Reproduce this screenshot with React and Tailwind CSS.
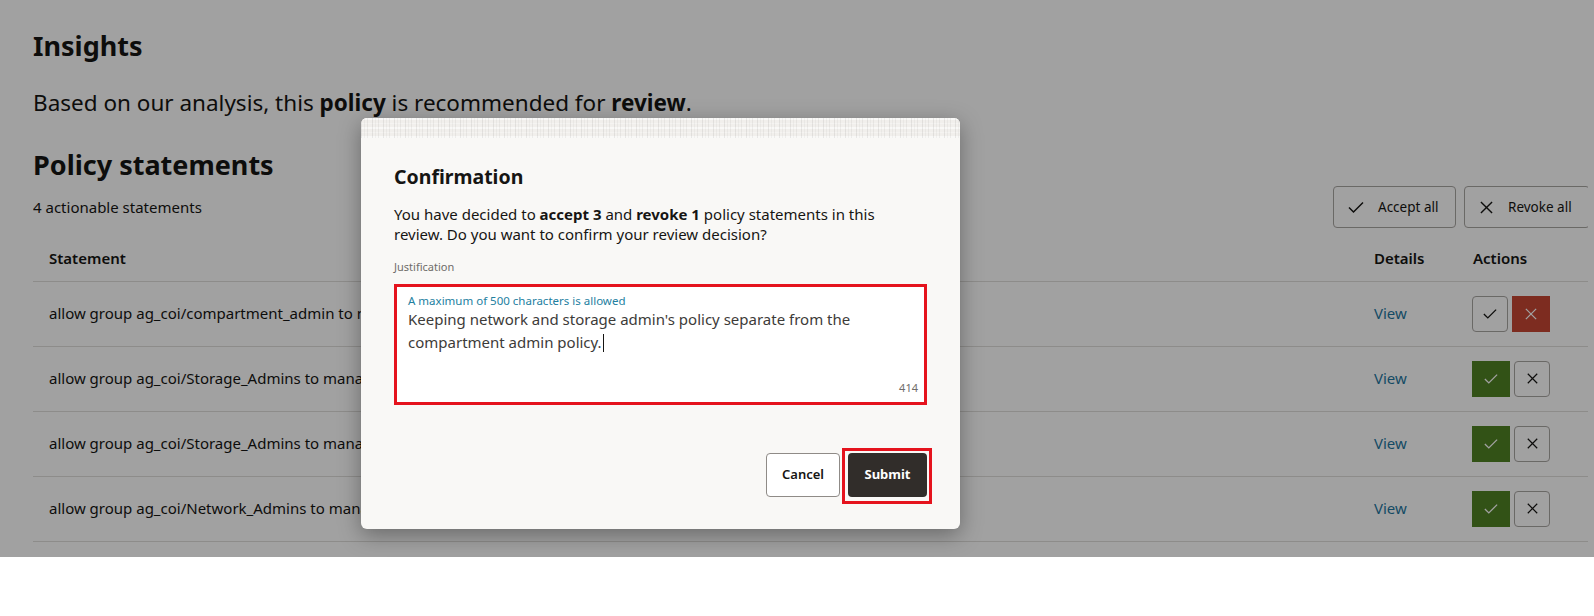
import React from 'react';

const statements = [
  { id: 1, text: 'allow group ag_coi/compartment_admin to manage all-resources in compartment ag_coi', decision: 'revoke' },
  { id: 2, text: 'allow group ag_coi/Storage_Admins to manage volume-family in compartment ag_coi', decision: 'accept' },
  { id: 3, text: 'allow group ag_coi/Storage_Admins to manage object-family in compartment ag_coi', decision: 'accept' },
  { id: 4, text: 'allow group ag_coi/Network_Admins to manage virtual-network-family in compartment ag_coi', decision: 'accept' },
];

const CheckIcon = ({ className }) => (
  <svg viewBox="0 0 16 13" fill="none" stroke="currentColor" strokeWidth="1.5" className={className}>
    <path d="M1 6.5 5.5 11 15 1.5" />
  </svg>
);

const CrossIcon = ({ className }) => (
  <svg viewBox="0 0 14 14" fill="none" stroke="currentColor" strokeWidth="1.5" className={className}>
    <path d="M1 1 13 13M13 1 1 13" />
  </svg>
);

const DecisionButtons = ({ decision }) => {
  const accepted = decision === 'accept';
  return (
    <div className="flex items-center gap-[4px]">
      {accepted ? (
        <button type="button" className="flex h-[36px] w-[38px] items-center justify-center bg-[#508223] text-white">
          <CheckIcon className="w-[14px] h-[12px]" />
        </button>
      ) : (
        <button type="button" className="flex h-[36px] w-[36px] items-center justify-center rounded-[4px] border border-[#a9a6a2] bg-white text-[#161513]">
          <CheckIcon className="w-[14px] h-[12px]" />
        </button>
      )}
      {accepted ? (
        <button type="button" className="flex h-[36px] w-[36px] items-center justify-center rounded-[4px] border border-[#a9a6a2] bg-white text-[#161513]">
          <CrossIcon className="w-[11px] h-[11px]" />
        </button>
      ) : (
        <button type="button" className="flex h-[36px] w-[38px] items-center justify-center bg-[#c74634] text-white">
          <CrossIcon className="w-[12px] h-[12px]" />
        </button>
      )}
    </div>
  );
};

const ConfirmDialog = () => (
  <div className="absolute left-[361px] top-[118px] w-[599px] overflow-hidden rounded-[6px] bg-[#f9f8f6] shadow-[0_6px_22px_rgba(0,0,0,0.35)]">
    {/* decorative textured band on top of the panel */}
    <div className="h-[20px] bg-[#f1efec] bg-[image:repeating-linear-gradient(90deg,rgba(0,0,0,0.07)_0px,rgba(0,0,0,0.07)_1px,transparent_1px,transparent_3px,rgba(0,0,0,0.035)_3px,rgba(0,0,0,0.035)_4px,transparent_4px,transparent_6px,rgba(0,0,0,0.05)_6px,rgba(0,0,0,0.05)_7px,transparent_7px,transparent_11px),repeating-linear-gradient(0deg,rgba(255,255,255,0.6)_0px,rgba(255,255,255,0.6)_2px,transparent_2px,transparent_5px,rgba(255,255,255,0.3)_5px,rgba(255,255,255,0.3)_6px,transparent_6px,transparent_9px)]" />
    <div className="px-[33px] pb-[32px]">
      <h2 className="mt-[25px] text-[19.5px] font-bold leading-[28px] text-[#161513]">Confirmation</h2>
      <p className="mt-[13px] text-[15px] leading-[20px] text-[#161513]">
        You have decided to <span className="font-bold">accept 3</span> and <span className="font-bold">revoke 1</span> policy statements in this
        <br />
        review. Do you want to confirm your review decision?
      </p>
      <div className="mt-[15px] text-[11px] leading-[16px] text-[#6f6c69]">Justification</div>
      <div className="mt-[9px] flex h-[121px] flex-col border-[3px] border-[#e5131d] bg-white px-[11px] pt-[6px] pb-[6px]">
        <div className="text-[11.5px] leading-[16px] text-[#23809f]">A maximum of 500 characters is allowed</div>
        <div className="text-[15px] leading-[21px] text-[#3d3b39]">
          Keeping network and storage admin's policy separate from the
          <br />
          compartment admin policy.<span className="ml-[1px] inline-block h-[18px] w-px translate-y-[4px] bg-[#161513] align-baseline" />
        </div>
        <div className="flex-1" />
        <div className="-mr-[5px] self-end text-[11px] leading-[16px] text-[#6f6c69]">414</div>
      </div>
      <div className="mt-[48px] flex justify-end gap-[8px]">
        <button type="button" className="h-[44px] w-[74px] rounded-[4px] border border-[#8f8b87] bg-white text-[13px] font-semibold text-[#161513]">
          Cancel
        </button>
        <div className="relative">
          <button type="button" className="h-[44px] w-[79px] rounded-[4px] bg-[#312d2a] text-[13px] font-bold text-white">
            Submit
          </button>
          <span className="pointer-events-none absolute -left-[6px] -right-[5px] -top-[5px] -bottom-[7px] border-[3px] border-[#e5131d]" />
        </div>
      </div>
    </div>
  </div>
);

export default function App() {
  return (
    <div className="min-h-[616px] bg-white font-['Noto_Sans',sans-serif]">
      <div className="relative h-[557px] overflow-hidden bg-white">
        <main className="pl-[33px] pr-[6px] pt-[28px] text-[#161513]">
          <div className="overflow-hidden">
            <h1 className="text-[27px] font-bold leading-[36px]">Insights</h1>
            <p className="mt-[24px] text-[22.5px] leading-[30px]">
              Based on our analysis, this <span className="font-bold">policy</span> is recommended for <span className="font-bold">review</span>.
            </p>
            <h2 className="mt-[29px] text-[27px] font-bold leading-[36px]">Policy statements</h2>

            <div className="mt-[3px] flex items-center justify-between">
              <span className="text-[15px]">4 actionable statements</span>
              <div className="-mr-[2px] flex gap-[8px]">
                <button type="button" className="flex h-[42px] w-[123px] items-center gap-[14px] rounded-[4px] border border-[#a9a6a2] bg-white px-[14px] text-[13.5px]">
                  <CheckIcon className="w-[16px] h-[13px]" />
                  Accept all
                </button>
                <button type="button" className="flex h-[42px] w-[126px] items-center gap-[15px] rounded-[4px] border border-[#a9a6a2] bg-white px-[15px] text-[13.5px]">
                  <CrossIcon className="w-[13px] h-[13px]" />
                  Revoke all
                </button>
              </div>
            </div>

            <table className="mt-[7px] w-full border-collapse text-left text-[15px]">
              <thead>
                <tr className="h-[46px] border-b border-[#e0dedb]">
                  <th className="pl-[16px] font-semibold">Statement</th>
                  <th className="w-[99px] pl-[16px] font-semibold">Details</th>
                  <th className="w-[131px] pl-[16px] font-semibold">Actions</th>
                </tr>
              </thead>
              <tbody>
                {statements.map((s) => (
                  <tr key={s.id} className="h-[65px] border-b border-[#e0dedb]">
                    <td className="pl-[16px]">{s.text}</td>
                    <td className="pl-[16px]">
                      <a href="#" className="text-[#1f77a0]">View</a>
                    </td>
                    <td className="pl-[15px]">
                      <DecisionButtons decision={s.decision} />
                    </td>
                  </tr>
                ))}
              </tbody>
            </table>
          </div>
        </main>

        <div className="absolute inset-0 bg-black/[0.37]" />
        <ConfirmDialog />
      </div>
    </div>
  );
}
